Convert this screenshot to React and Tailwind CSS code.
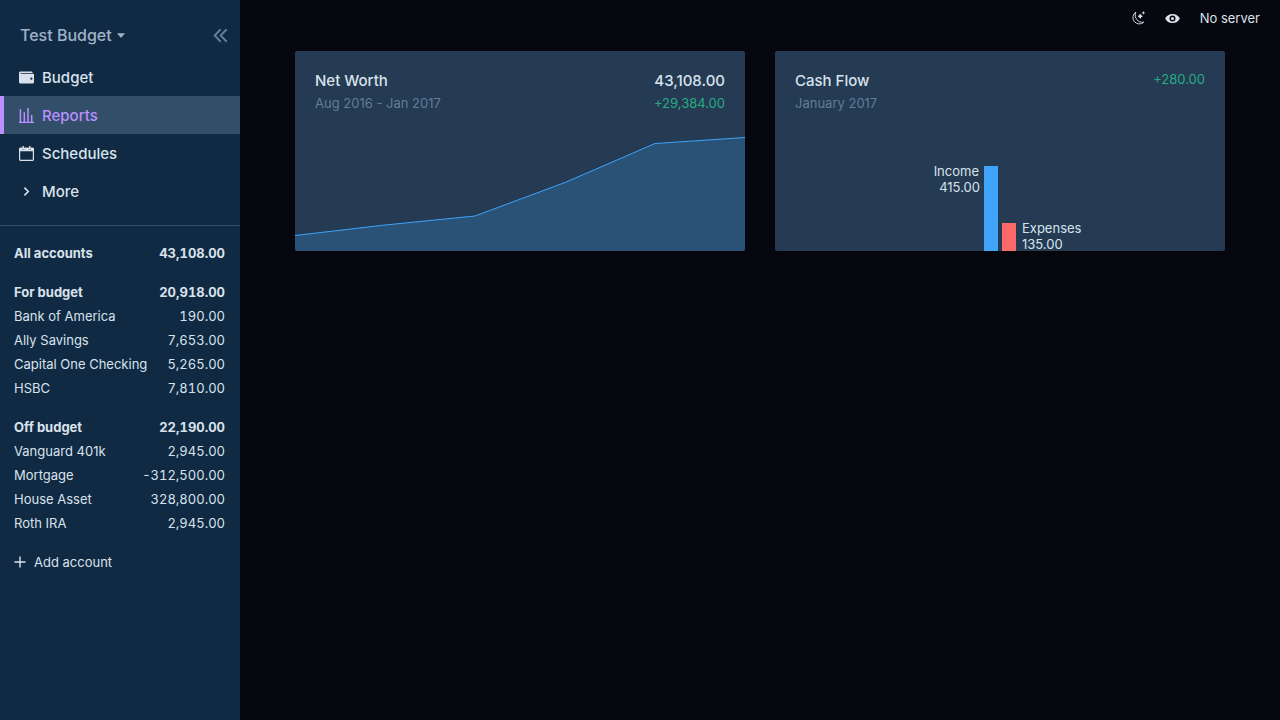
const forBudget = [
  ['Bank of America', '190.00'],
  ['Ally Savings', '7,653.00'],
  ['Capital One Checking', '5,265.00'],
  ['HSBC', '7,810.00'],
];

const offBudget = [
  ['Vanguard 401k', '2,945.00'],
  ['Mortgage', '-312,500.00'],
  ['House Asset', '328,800.00'],
  ['Roth IRA', '2,945.00'],
];

function WalletIcon() {
  return (
    <svg viewBox="0 0 20 20" className="size-[15px] shrink-0" fill="currentColor" aria-hidden="true">
      <path d="M0 4c0-1.1.9-2 2-2h15a1 1 0 0 1 1 1v1H2v1h17a1 1 0 0 1 1 1v10a2 2 0 0 1-2 2H2a2 2 0 0 1-2-2V4zm16.5 9a1.5 1.5 0 1 0 0-3 1.5 1.5 0 0 0 0 3z" />
    </svg>
  );
}

function ReportsIcon() {
  return (
    <svg viewBox="0 0 15 15" className="size-[15px] shrink-0" fill="none" stroke="currentColor" aria-hidden="true">
      <path d="M0 14.4h15" strokeWidth="1.4" />
      <path d="M1.4 14V1.2M5.3 14V4.2M9 14V0M12.7 14V7" strokeWidth="1.5" />
    </svg>
  );
}

function CalendarIcon() {
  return (
    <svg viewBox="0 0 15 15" className="size-[15px] shrink-0" aria-hidden="true">
      <rect x="0.6" y="2.4" width="13.8" height="12" rx="0.8" fill="none" stroke="currentColor" strokeWidth="1.2" />
      <path d="M0 5.2V2.8a1 1 0 0 1 1-1h2v1.6h2.4V1.8h4.2v1.6H12V1.8h2a1 1 0 0 1 1 1v2.4z" fill="currentColor" />
      <path d="M4.2 0v3.6M10.8 0v3.6" stroke="currentColor" strokeWidth="1.4" />
    </svg>
  );
}

function ChevronIcon() {
  return (
    <svg viewBox="0 0 15 15" className="size-[15px] shrink-0" fill="none" stroke="currentColor" strokeWidth="1.6" aria-hidden="true">
      <path d="M5.4 3.6 9.3 7.5 5.4 11.4" />
    </svg>
  );
}

function MoonIcon() {
  return (
    <svg viewBox="0 0 24 24" className="size-3.5" fill="none" stroke="currentColor" strokeWidth="1.6" strokeLinejoin="round" aria-hidden="true">
      <path d="M8.2 2A11 11 0 1 0 21.8 19.2C12 20.8 4.6 11.6 8.2 2z" />
      <path d="M15.8 5.4l1.1 2.5 2.5 1.1-2.5 1.1-1.1 2.5-1.1-2.5-2.5-1.1 2.5-1.1z" fill="currentColor" />
      <path d="M21.2 0.8v4.8M18.8 3.2h4.8" />
    </svg>
  );
}

function EyeIcon() {
  return (
    <svg viewBox="0 0 20 20" className="size-[15px]" fill="currentColor" aria-hidden="true">
      <path d="M.2 10a11 11 0 0 1 19.6 0A11 11 0 0 1 .2 10zm9.8 4a4 4 0 1 0 0-8 4 4 0 0 0 0 8zm0-2a2 2 0 1 1 0-4 2 2 0 0 1 0 4z" />
    </svg>
  );
}

function NavItem({ icon, children, active = false }) {
  return (
    <a
      href="#"
      aria-current={active ? 'page' : undefined}
      className={
        active
          ? 'flex h-[38px] items-center gap-2 border-l-4 border-[#b990ff] bg-[#334e68] pl-[15px] text-[15px] font-medium text-[#b990ff]'
          : 'flex h-[38px] items-center gap-2 border-l-4 border-transparent pl-[15px] text-[15px] font-medium'
      }
    >
      {icon}
      <span className="pt-0.5">{children}</span>
    </a>
  );
}

function Account({ name, amount, bold = false }) {
  return (
    <a
      href="#"
      className={
        bold
          ? 'flex h-6 items-center justify-between pt-0.5 pr-[15px] pl-3.5 font-bold'
          : 'flex h-6 items-center justify-between pt-0.5 pr-[15px] pl-3.5'
      }
    >
      <span>{name}</span>
      <span className="tabular-nums">{amount}</span>
    </a>
  );
}

function Sidebar() {
  return (
    <aside className="w-60 shrink-0 bg-[#102a43]">
      <div className="flex h-[58px] items-center justify-between pt-3 pr-3 pl-5">
        <button type="button" className="flex items-center gap-[5px] text-base font-medium text-[#9fb3c8]">
          Test Budget
          <svg viewBox="0 0 8 5" className="h-[5px] w-2" fill="currentColor" aria-hidden="true">
            <path d="M0.5 0.3h7a.3.3 0 0 1 .2.5L4.4 4.5a.5.5 0 0 1-.8 0L.3.8a.3.3 0 0 1 .2-.5z" />
          </svg>
        </button>
        <button type="button" aria-label="Collapse sidebar" className="text-[#627d98]">
          <svg viewBox="0 0 15 15" className="size-[15px]" fill="none" stroke="currentColor" strokeWidth="2" aria-hidden="true">
            <path d="M7.7 1.2 1.7 7.5l6 6.3M13.7 1.2l-6 6.3 6 6.3" />
          </svg>
        </button>
      </div>
      <nav>
        <NavItem icon={<WalletIcon />}>Budget</NavItem>
        <NavItem icon={<ReportsIcon />} active>Reports</NavItem>
        <NavItem icon={<CalendarIcon />}>Schedules</NavItem>
        <NavItem icon={<ChevronIcon />}>More</NavItem>
      </nav>
      <hr className="mt-[15px] mb-[15px] border-[#334e68]" />
      <div className="flex flex-col gap-[15px] text-[13px]">
        <Account name="All accounts" amount="43,108.00" bold />
        <div>
          <Account name="For budget" amount="20,918.00" bold />
          {forBudget.map(([name, amount]) => (
            <Account key={name} name={name} amount={amount} />
          ))}
        </div>
        <div>
          <Account name="Off budget" amount="22,190.00" bold />
          {offBudget.map(([name, amount]) => (
            <Account key={name} name={name} amount={amount} />
          ))}
        </div>
        <button type="button" className="flex h-6 items-center gap-2 pl-3.5">
          <svg viewBox="0 0 12 12" className="size-3" stroke="currentColor" strokeWidth="1.4" aria-hidden="true">
            <path d="M6 0.4v11.2M0.4 6h11.2" />
          </svg>
          <span className="pt-0.5">Add account</span>
        </button>
      </div>
    </aside>
  );
}

function Card({ title, period, children, chart }) {
  return (
    <section className="flex h-[200px] flex-1 flex-col overflow-hidden rounded-xs bg-[#243b53] shadow-[0_2px_6px_rgba(0,0,0,0.25)]">
      <div className="flex justify-between px-5 pt-5">
        <div>
          <h2 className="text-[15px] leading-5 font-medium">{title}</h2>
          <p className="mt-0.5 text-[13px] leading-5 text-[#627d98]">{period}</p>
        </div>
        <div className="text-right">{children}</div>
      </div>
      {chart}
    </section>
  );
}

function NetWorthChart() {
  return (
    <svg viewBox="0 0 450 120" preserveAspectRatio="none" className="mt-auto h-[120px] w-full" aria-label="Net worth over time">
      <path d="M0 104.5 90 94 180 85 270 51.5 360 12.5 450 6.5V120H0z" fill="#40a4fb" fillOpacity="0.22" />
      <path d="M0 104.5 90 94 180 85 270 51.5 360 12.5 450 6.5" fill="none" stroke="#3fa3fa" />
    </svg>
  );
}

function CashFlowChart() {
  return (
    <div className="mt-auto grid h-[88px] grid-cols-[1fr_14px_14px_1fr] items-end gap-x-1 text-[13px] leading-4">
      <div className="self-start text-right">
        <p className="pr-px">Income</p>
        <p>415.00</p>
      </div>
      <div className="h-[85px] bg-[#40a4fb]" />
      <div className="h-7 bg-[#fb6a69]" />
      <div className="h-[31px] pl-0.5">
        <p>Expenses</p>
        <p>135.00</p>
      </div>
    </div>
  );
}

export default function App() {
  return (
    <div className="flex min-h-screen bg-[#07070f] font-[Inter,sans-serif] text-[#d9e2ec]">
      <Sidebar />
      <div className="flex min-w-0 flex-1 flex-col">
        <header className="flex h-9 items-center justify-end gap-5 pr-5 text-[13px]">
          <button type="button" aria-label="Switch theme"><MoonIcon /></button>
          <button type="button" aria-label="Toggle privacy"><EyeIcon /></button>
          <button type="button" className="pt-0.5">No server</button>
        </header>
        <main className="flex gap-[30px] px-[55px] pt-[15px]">
          <Card title="Net Worth" period="Aug 2016 - Jan 2017" chart={<NetWorthChart />}>
            <p className="text-[15px] leading-5 font-medium">43,108.00</p>
            <p className="mt-0.5 text-[13px] leading-5 text-[#27ab83]">+29,384.00</p>
          </Card>
          <Card title="Cash Flow" period="January 2017" chart={<CashFlowChart />}>
            <p className="text-[13px] leading-4 text-[#27ab83]">+280.00</p>
          </Card>
        </main>
      </div>
    </div>
  );
}
